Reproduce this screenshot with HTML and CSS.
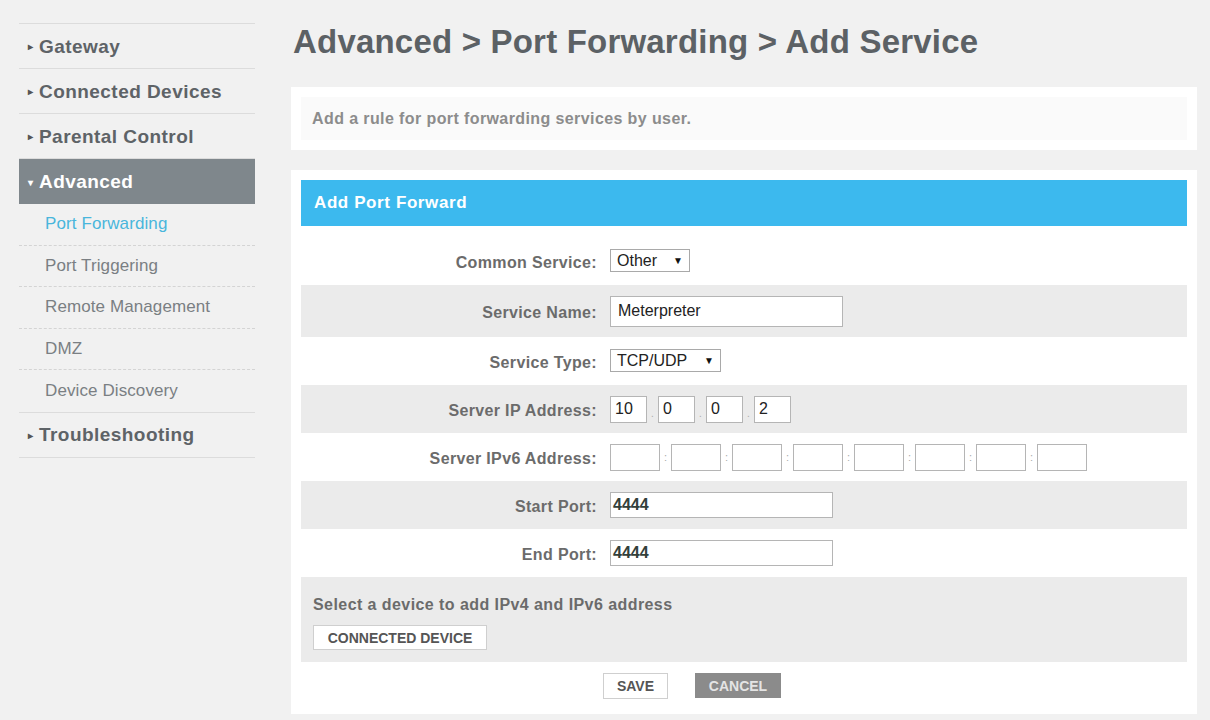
FILE: index.html
```html
<!DOCTYPE html>
<html>
<head>
<meta charset="utf-8">
<link rel="stylesheet" href="styles.css">
</head>
<body>
<div class="page">
  <nav class="sidebar">
    <div class="nav-item"><span class="caret">&#9656;</span>Gateway</div>
    <div class="nav-item"><span class="caret">&#9656;</span>Connected Devices</div>
    <div class="nav-item"><span class="caret">&#9656;</span>Parental Control</div>
    <div class="nav-item active"><span class="caret">&#9662;</span>Advanced</div>
    <div class="sub-list">
      <div class="sub-item current">Port Forwarding</div>
      <div class="sub-item">Port Triggering</div>
      <div class="sub-item">Remote Management</div>
      <div class="sub-item">DMZ</div>
      <div class="sub-item last">Device Discovery</div>
    </div>
    <div class="nav-item"><span class="caret">&#9656;</span>Troubleshooting</div>
  </nav>
  <main class="main">
    <h1 class="title">Advanced &gt; Port Forwarding &gt; Add Service</h1>
    <div class="desc-card">
      <div class="desc-inner">Add a rule for port forwarding services by user.</div>
    </div>
    <div class="form-card">
      <div class="form-head">Add Port Forward</div>
      <div class="form-body">
        <div class="row r1">
          <div class="label">Common Service:</div>
          <div class="field"><span class="select sel-other">Other<span class="arrow">&#9660;</span></span></div>
        </div>
        <div class="row odd r2">
          <div class="label">Service Name:</div>
          <div class="field"><span class="input name-input">Meterpreter</span></div>
        </div>
        <div class="row">
          <div class="label">Service Type:</div>
          <div class="field"><span class="select sel-type">TCP/UDP<span class="arrow">&#9660;</span></span></div>
        </div>
        <div class="row odd">
          <div class="label">Server IP Address:</div>
          <div class="field ip">
            <span class="input ip4">10</span><span class="sep">.</span>
            <span class="input ip4">0</span><span class="sep">.</span>
            <span class="input ip4">0</span><span class="sep">.</span>
            <span class="input ip4">2</span>
          </div>
        </div>
        <div class="row">
          <div class="label">Server IPv6 Address:</div>
          <div class="field ip6">
            <span class="input ip6box"></span><span class="sep6">:</span>
            <span class="input ip6box"></span><span class="sep6">:</span>
            <span class="input ip6box"></span><span class="sep6">:</span>
            <span class="input ip6box"></span><span class="sep6">:</span>
            <span class="input ip6box"></span><span class="sep6">:</span>
            <span class="input ip6box"></span><span class="sep6">:</span>
            <span class="input ip6box"></span><span class="sep6">:</span>
            <span class="input ip6box"></span>
          </div>
        </div>
        <div class="row odd">
          <div class="label">Start Port:</div>
          <div class="field"><span class="input port">4444</span></div>
        </div>
        <div class="row">
          <div class="label">End Port:</div>
          <div class="field"><span class="input port">4444</span></div>
        </div>
        <div class="device-box">
          <div class="device-text">Select a device to add IPv4 and IPv6 address</div>
          <span class="btn btn-light">CONNECTED DEVICE</span>
        </div>
        <div class="actions">
          <span class="btn btn-light save">SAVE</span>
          <span class="btn btn-dark">CANCEL</span>
        </div>
      </div>
    </div>
  </main>
</div>
</body>
</html>
```

FILE: styles.css
```css
* { box-sizing: border-box; }
html, body {
  margin: 0;
  padding: 0;
  background: #f1f1f1;
  font-family: "Liberation Sans", Arial, sans-serif;
  overflow: hidden;
}
.page {
  display: flex;
  align-items: flex-start;
  height: 720px;
}
.sidebar {
  width: 236px;
  margin-left: 19px;
  margin-top: 23px;
  border-top: 1px solid #dcdcdc;
}
.nav-item {
  height: 45px;
  display: flex;
  align-items: center;
  border-bottom: 1px solid #dcdcdc;
  font-size: 19px;
  font-weight: bold;
  color: #5e6367;
  letter-spacing: 0.45px;
  padding-top: 1px;
}
.nav-item .caret {
  width: 20px;
  font-size: 10px;
  text-align: center;
  color: #555;
  padding-left: 2px;
  letter-spacing: 0;
}
.nav-item.active {
  background: #7f878c;
  color: #ffffff;
  border-bottom: none;
  height: 45px;
}
.nav-item.active .caret {
  color: #fff;
}
.sub-list {
  border-bottom: 1px solid #dcdcdc;
}
.sub-item {
  height: 41.5px;
  display: flex;
  align-items: center;
  padding-left: 26px;
  font-size: 17px;
  color: #7a7f83;
  letter-spacing: 0.1px;
  border-bottom: 1px dashed #d4d4d4;
}
.sub-item.last { border-bottom: none; }
.sub-item.current { color: #49b6dc; }

.main {
  width: 906px;
  margin-left: 36px;
}
.title {
  margin: 20px 0 0 2px;
  height: 44px;
  font-size: 33px;
  font-weight: bold;
  color: #5c6165;
  line-height: 44px;
  letter-spacing: 0.2px;
}
.desc-card {
  margin-top: 23px;
  background: #ffffff;
  padding: 10px;
  height: 63px;
}
.desc-inner {
  background: #fafafa;
  height: 43px;
  display: flex;
  align-items: center;
  padding-left: 11px;
  font-size: 16px;
  font-weight: bold;
  color: #8c8c8c;
  letter-spacing: 0.4px;
}
.form-card {
  margin-top: 20px;
  background: #ffffff;
  padding: 10px 10px 0 10px;
  height: 544px;
}
.form-head {
  background: #3cb9ee;
  height: 46px;
  display: flex;
  align-items: center;
  padding-left: 13px;
  color: #ffffff;
  font-size: 17px;
  font-weight: bold;
  letter-spacing: 0.6px;
}
.form-body {
  padding-top: 12px;
}
.row {
  display: flex;
  align-items: center;
  height: 48px;
}
.row.r1 { height: 47px; }
.row.r2 { height: 52px; }
.row.odd { background: #ebebeb; }
.label {
  width: 296px;
  text-align: right;
  font-size: 16px;
  font-weight: bold;
  color: #6b6b6b;
  letter-spacing: 0.35px;
  padding-top: 3px;
}
.field {
  margin-left: 13px;
  display: flex;
  align-items: center;
}
.select {
  display: inline-flex;
  align-items: center;
  height: 23px;
  border: 1px solid #a9a9a9;
  background: #fff;
  padding: 0 6px;
  font-size: 16px;
  color: #222;
  justify-content: space-between;
}
.select .arrow {
  font-size: 10px;
  color: #111;
}
.sel-other { width: 80px; margin-top: -2px; }
.sel-type { width: 111px; margin-top: -1px; }
.input {
  display: inline-flex;
  align-items: center;
  border: 1px solid #b5b5b5;
  background: #fff;
  font-size: 15px;
  color: #222;
  padding-left: 7px;
}
.name-input {
  width: 233px;
  height: 31px;
  font-size: 16px;
}
.ip4 {
  width: 37px;
  height: 27px;
  padding-left: 4px;
  font-size: 16px;
}
.sep {
  width: 11px;
  text-align: center;
  font-size: 10px;
  color: #aaa;
  align-self: flex-end;
  padding-bottom: 4px;
}
.ip6box {
  width: 50px;
  height: 27px;
}
.sep6 {
  width: 11px;
  text-align: center;
  font-size: 11px;
  color: #aaa;
}
.port {
  width: 223px;
  height: 26px;
  padding-left: 2px;
  font-size: 16px;
  font-weight: bold;
  color: #33403a;
}
.device-box {
  margin-top: 0;
  background: #ebebeb;
  height: 85px;
  padding: 19px 0 0 12px;
}
.device-text {
  font-size: 16px;
  font-weight: bold;
  color: #6b6b6b;
  letter-spacing: 0.43px;
}
.btn {
  display: inline-flex;
  align-items: center;
  justify-content: center;
  font-size: 14px;
  font-weight: bold;
  height: 25px;
}
.btn-light {
  background: #fff;
  border: 1px solid #cfcfcf;
  color: #555;
}
.device-box .btn-light {
  margin-top: 11px;
  width: 174px;
}
.actions {
  display: flex;
  justify-content: flex-start;
  padding-left: 302px;
  padding-top: 11px;
  gap: 27px;
}
.save { width: 65px; height: 26px; }
.btn-dark {
  background: #8b8b8b;
  color: #e4e4e4;
  width: 86px;
  height: 25px;
}
```
